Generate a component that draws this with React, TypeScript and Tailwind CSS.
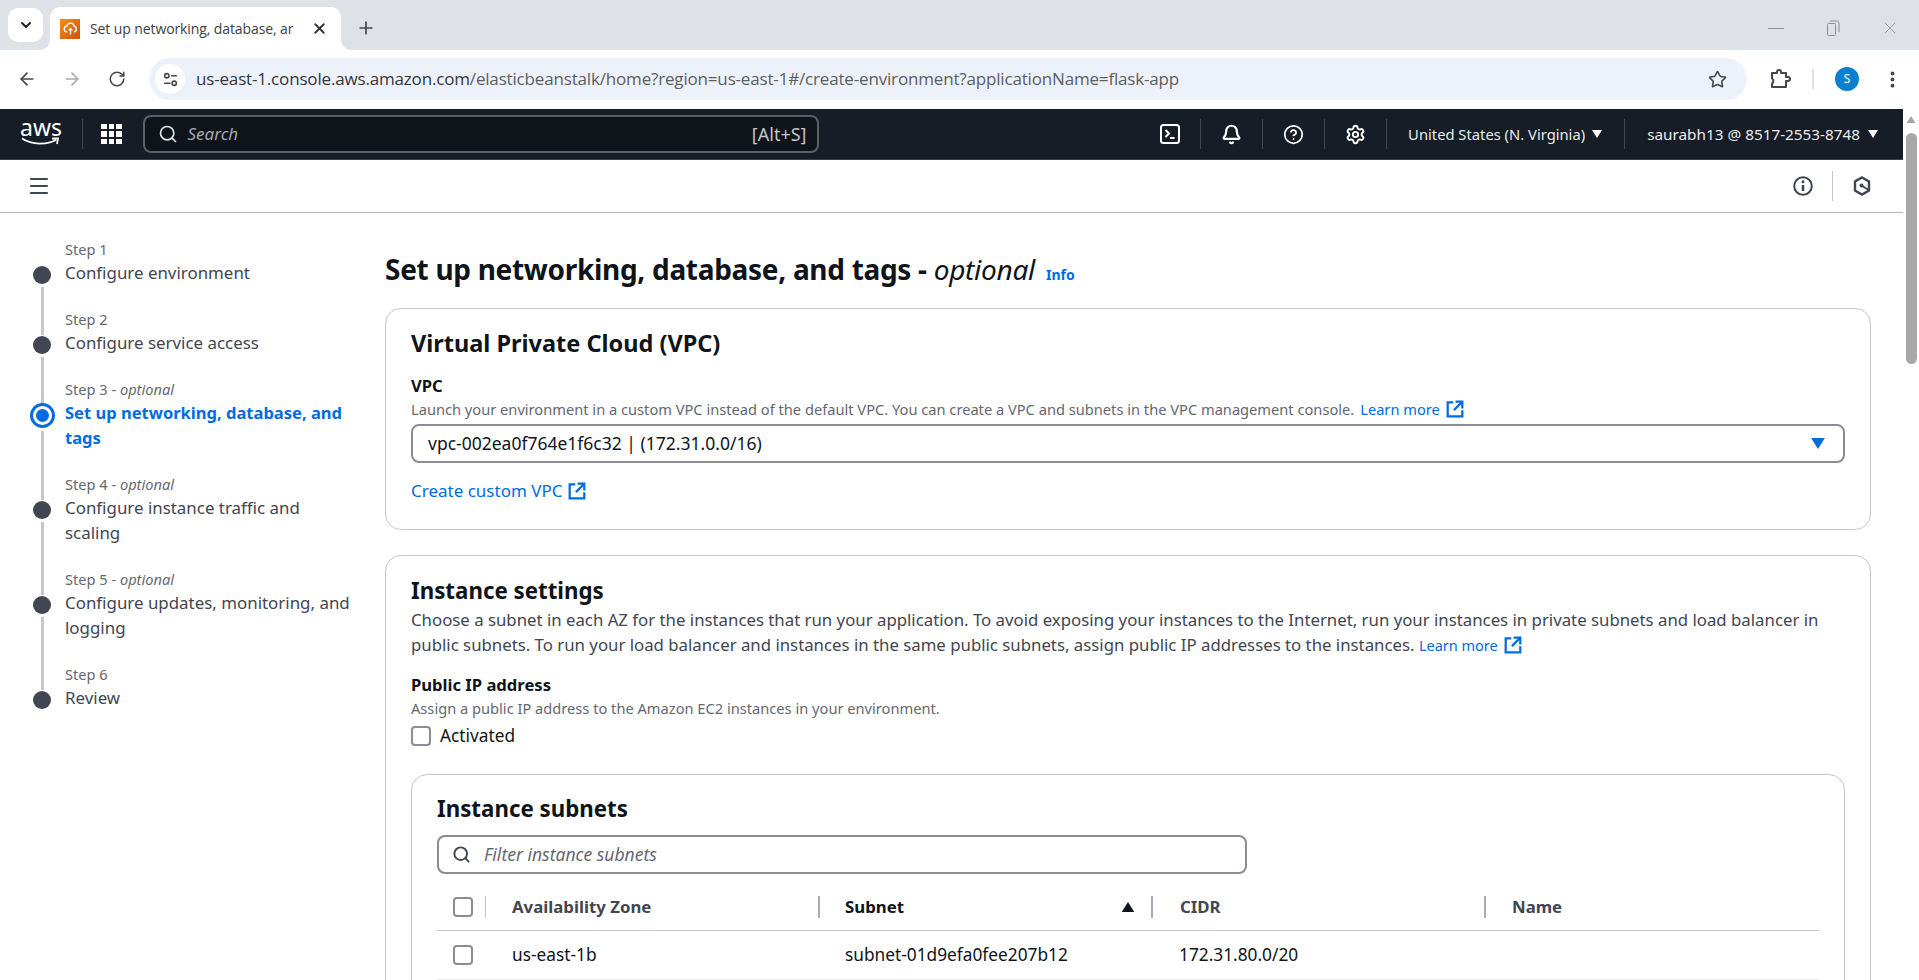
import React from 'react';
import { ChevronDown, X, Plus, ArrowLeft, ArrowRight, RotateCw, Star, EllipsisVertical, Search, Menu, Bell, CircleHelp, Settings } from 'lucide-react';

const ember = { fontFamily: '"Noto Sans", "Open Sans", sans-serif' };
const chromeFont = { fontFamily: '"Open Sans", sans-serif' };

function ExternalIcon({ className }: { className?: string }) {
  return (
    <svg viewBox="0 0 16 16" className={className} fill="none" stroke="currentColor" strokeWidth="2">
      <path d="M6.5 2H1.5V14.5H14.5V9" />
      <path d="M8.5 1.5H14.5V7.5" />
      <path d="M14 2L7 9" />
    </svg>
  );
}

function Caret({ className }: { className?: string }) {
  return (
    <svg viewBox="0 0 10 8" className={className} fill="currentColor">
      <path d="M0 0H10L5 8Z" />
    </svg>
  );
}

function NavDivider() {
  return <div className="w-px h-[30px] bg-[#424650] shrink-0" />;
}

function BrowserChrome() {
  return (
    <>
      <div className="h-[50px] bg-[#dee1e6] flex items-end shrink-0">
        <div className="w-[35px] h-[34px] bg-white rounded-[10px] ml-[8px] mb-[8px] flex items-center justify-center">
          <ChevronDown size={16} strokeWidth={3} className="text-[#222]" />
        </div>
        <div className="w-[291px] h-[43px] bg-white rounded-t-[10px] ml-[7px] flex items-center pl-[10px] relative">
          <div className="absolute -left-[10px] bottom-0 w-[10px] h-[10px] bg-white">
            <div className="w-full h-full bg-[#dee1e6] rounded-br-[10px]" />
          </div>
          <div className="absolute -right-[10px] bottom-0 w-[10px] h-[10px] bg-white">
            <div className="w-full h-full bg-[#dee1e6] rounded-bl-[10px]" />
          </div>
          <div className="w-[20px] h-[20px] bg-gradient-to-br from-[#f5900f] to-[#cf4f12] flex items-center justify-center shrink-0">
            <svg viewBox="0 0 16 16" className="w-[15px] h-[15px]" fill="none" stroke="white" strokeWidth="1.4">
              <path d="M4.5 11.5a3 3 0 0 1-.4-6A4 4 0 0 1 12 5.6a3 3 0 0 1-.4 5.9" />
              <path d="M8 14.5V8M6 10l2-2 2 2" />
            </svg>
          </div>
          <span className="ml-[10px] text-[14px] text-[#3c4043] whitespace-nowrap w-[208px] overflow-hidden shrink-0" style={{ ...chromeFont, letterSpacing: '-0.1px' }}>Set up networking, database, ar</span>
          <X size={17} strokeWidth={2.6} className="text-[#333] ml-[13px] shrink-0" />
        </div>
        <Plus size={20} strokeWidth={2} className="text-[#444] ml-[15px] mb-[12px]" />
        <div className="ml-auto flex items-center mb-[12px] mr-[19px]">
          <div className="w-[16px] h-px bg-[#8d9095]" />
          <svg viewBox="0 0 14 16" className="w-[14px] h-[16px] ml-[42px]" fill="none" stroke="#8d9095" strokeWidth="1">
            <rect x="1.5" y="3.5" width="8" height="12" rx="1" />
            <path d="M4 1h7a2 2 0 0 1 2 2v9" />
          </svg>
          <X size={20} strokeWidth={1} className="ml-[40px] text-[#8d9095]" />
        </div>
      </div>
      <div className="h-[58px] bg-white rounded-t-[10px] flex items-center pl-[17px] shrink-0 text-[#444746]">
        <ArrowLeft size={20} strokeWidth={2} />
        <ArrowRight size={20} strokeWidth={2} className="ml-[25px] text-[#a8aaad]" />
        <RotateCw size={18} strokeWidth={2} className="ml-[26px]" />
        <div className="ml-[23px] w-[1598px] h-[42px] rounded-full bg-[#edf2fa] flex items-center pl-[6px] pr-[20px] shrink-0">
          <div className="w-[30px] h-[30px] bg-white rounded-full flex items-center justify-center shrink-0">
            <svg viewBox="0 0 16 16" className="w-[17px] h-[17px]" fill="none" stroke="#444746" strokeWidth="1.5">
              <circle cx="4.5" cy="4.5" r="2" />
              <path d="M8.5 4.5H14M2 11.5h6" />
              <circle cx="11.5" cy="11.5" r="2" />
            </svg>
          </div>
          <span className="ml-[11px] text-[17px] text-[#33363a] whitespace-nowrap" style={{ ...chromeFont, letterSpacing: '-0.17px' }}>us-east-1.console.aws.amazon.com<span className="text-[#5b5e62]">/elasticbeanstalk/home?region=us-east-1#/create-environment?applicationName=flask-app</span></span>
          <Star size={19} strokeWidth={2} className="ml-auto shrink-0" />
        </div>
        <svg viewBox="0 0 22 22" className="w-[22px] h-[22px] ml-[22px] shrink-0" fill="none" stroke="#444746" strokeWidth="2" strokeLinejoin="round">
          <path d="M3 5H8V4a2 2 0 0 1 4 0V5H17V9H19a2 2 0 0 1 0 4H17V19H3V15.5a3 3 0 0 0 0-5Z" />
        </svg>
        <div className="w-[2px] h-[20px] bg-[#d3e3fd] ml-[21px] shrink-0" />
        <div className="w-[24px] h-[24px] rounded-full bg-[#0b7fd0] text-white text-[12px] flex items-center justify-center ml-[21px] shrink-0">S</div>
        <EllipsisVertical size={21} strokeWidth={2.4} className="ml-[23px] shrink-0" />
      </div>
    </>
  );
}

function TopNav() {
  return (
    <div className="h-[51px] bg-[#161d26] border-b border-[#3b4149] flex items-center text-white shrink-0" style={ember}>
      <div className="ml-[21px] w-[40px] flex flex-col items-center">
        <span className="text-[23px] leading-[18px] -mt-[4px]">aws</span>
        <svg viewBox="0 0 40 9" className="w-[40px] h-[9px] mt-[1px]" fill="none" stroke="white" strokeWidth="1.8">
          <path d="M1 1.5C11 8 26 8 35 3M31 1.5L37 1.5L36 7" />
        </svg>
      </div>
      <div className="w-px h-[30px] bg-[#424650] ml-[21px]" />
      <div className="grid grid-cols-3 gap-[2px] ml-[18px]">
        {Array.from({ length: 9 }).map((_, i) => (
          <div key={i} className="w-[5.5px] h-[5.5px] bg-white" />
        ))}
      </div>
      <div className="ml-[21px] w-[676px] h-[38px] bg-[#0f141a] border-2 border-[#5b6067] rounded-[8px] flex items-center pl-[13px] pr-[10px]">
        <Search size={20} strokeWidth={2} className="text-[#dfe1e3]" />
        <span className="ml-[10px] text-[17px] italic text-[#a3a7ac]">Search</span>
        <span className="ml-auto text-[18px] text-[#c2c4c7]">[Alt+S]</span>
      </div>
      <div className="ml-auto flex items-center h-full pr-[25px]">
        <svg viewBox="0 0 20 20" className="w-[20px] h-[20px] mr-[20px]" fill="none" stroke="white" strokeWidth="2">
          <rect x="1" y="1" width="18" height="18" rx="2.5" />
          <path d="M5.5 6l3.5 3.5L5.5 13M10 14h4.5" />
        </svg>
        <NavDivider />
        <Bell size={21} strokeWidth={2.5} className="mx-[20px]" />
        <NavDivider />
        <CircleHelp size={21} strokeWidth={2} className="mx-[20px]" />
        <NavDivider />
        <Settings size={21} strokeWidth={2.2} className="mx-[20px]" />
        <NavDivider />
        <span className="ml-[21px] text-[14.75px] text-[#e9ebed] whitespace-nowrap">United States (N. Virginia)</span>
        <Caret className="w-[10px] h-[8px] ml-[7px] text-white" />
        <div className="w-px h-[30px] bg-[#424650] ml-[22px]" />
        <span className="ml-[22px] text-[15.3px] text-[#e9ebed] whitespace-nowrap">saurabh13 @ 8517-2553-8748</span>
        <Caret className="w-[10px] h-[8px] ml-[8px] text-white" />
      </div>
    </div>
  );
}

function SubBar() {
  return (
    <div className="h-[53px] bg-white border-b border-[#b4b4bb] flex items-center shrink-0 text-[#424650]">
      <Menu size={24} strokeWidth={2.2} className="ml-[27px]" />
      <div className="ml-auto flex items-center">
        <svg viewBox="0 0 20 20" className="w-[20px] h-[20px]" fill="none" stroke="#424650" strokeWidth="2">
          <circle cx="10" cy="10" r="8.8" />
          <path d="M10 9V15" strokeWidth="2.6" />
          <circle cx="10" cy="5.8" r="1.5" fill="#424650" stroke="none" />
        </svg>
        <div className="w-px h-[30px] bg-[#c6c6cd] mx-[19px]" />
        <svg viewBox="0 0 20 20" className="w-[20px] h-[20px] mr-[31px]" fill="none" stroke="#424650" strokeWidth="2.4">
          <path d="M10 1.5L17 5.5V14.5L10 18.5L3 14.5V5.5Z" />
          <circle cx="9.5" cy="9.5" r="2" fill="#424650" stroke="none" />
          <path d="M10 10L16 13.5" strokeWidth="2" />
        </svg>
      </div>
    </div>
  );
}

const steps = [
  { n: 'Step 1', title: 'Configure environment', opt: false },
  { n: 'Step 2', title: 'Configure service access', opt: false },
  { n: 'Step 3', title: 'Set up networking, database, and tags', opt: true, active: true },
  { n: 'Step 4', title: 'Configure instance traffic and scaling', opt: true },
  { n: 'Step 5', title: 'Configure updates, monitoring, and logging', opt: true },
  { n: 'Step 6', title: 'Review', opt: false },
];

function Steps() {
  return (
    <nav className="w-[385px] shrink-0 pl-[24px] pt-[26px]">
      {steps.map((s, i) => (
        <div key={s.n} className="flex">
          <div className="w-[36px] shrink-0 flex flex-col items-center pt-[27px]">
            {s.active ? (
              <div className="w-[25px] h-[25px] -mt-[3px] shrink-0 rounded-full border-[3px] border-[#006ce0] flex items-center justify-center bg-white">
                <div className="w-[13px] h-[13px] rounded-full bg-[#006ce0]" />
              </div>
            ) : (
              <div className="w-[18px] h-[18px] shrink-0 rounded-full bg-[#424650]" />
            )}
            {i < steps.length - 1 && <div className="w-[3px] flex-1 bg-[#c6c6cd] mt-[3px] -mb-[26px]" />}
          </div>
          <div className={i < steps.length - 1 ? 'w-[292px] pl-[5px] pb-[24px]' : 'w-[292px] pl-[5px]'}>
            <div className="text-[14.6px] leading-[20px] text-[#656871]">
              {s.n}{s.opt && <> - <i>optional</i></>}
            </div>
            <div className={s.active ? 'mt-px text-[16.55px] leading-[25px] font-bold text-[#006ce0]' : 'mt-px text-[16.9px] leading-[25px] text-[#424650]'}>{s.title}</div>
          </div>
        </div>
      ))}
    </nav>
  );
}

function CheckBox() {
  return <div className="w-[20px] h-[20px] border-2 border-[#8c8c94] rounded-[4px] bg-white shrink-0" />;
}

function Content() {
  return (
    <main className="flex-1 min-w-0 pr-[32px]">
      <div className="flex items-baseline pt-[38px] h-[95px]">
        <h1 className="text-[28px] leading-[36px] font-bold text-[#0f141a] tracking-[-0.3px]">Set up networking, database, and tags - <i className="font-normal">optional</i></h1>
        <a className="ml-[11px] text-[14px] font-bold text-[#006ce0]">Info</a>
      </div>

      <section className="border border-[#c6c6cd] rounded-[16px] h-[222px] px-[25px] pt-[18px]">
        <h2 className="text-[23.5px] leading-[32px] font-bold text-[#0f141a]">Virtual Private Cloud (VPC)</h2>
        <div className="mt-[16px] text-[16.6px] leading-[22px] font-bold text-[#0f141a]">VPC</div>
        <div className="mt-[2px] text-[14.65px] leading-[20px] text-[#656871] flex items-center whitespace-nowrap">
          Launch your environment in a custom VPC instead of the default VPC. You can create a VPC and subnets in the VPC management console.
          <a className="ml-[6px] text-[#006ce0] flex items-center">Learn more<ExternalIcon className="w-[18px] h-[18px] ml-[6px]" /></a>
        </div>
        <div className="mt-[5px] h-[39px] border-2 border-[#8c8c94] rounded-[8px] flex items-center pl-[15px] pr-[18px]">
          <span className="text-[17.5px] text-[#0f141a]">vpc-002ea0f764e1f6c32 | (172.31.0.0/16)</span>
          <Caret className="w-[14px] h-[11px] ml-auto text-[#006ce0]" />
        </div>
        <a className="mt-[17px] text-[17px] leading-[22px] text-[#006ce0] flex items-center">Create custom VPC<ExternalIcon className="w-[18px] h-[18px] ml-[6px]" /></a>
      </section>

      <section className="border border-[#c6c6cd] rounded-[16px] mt-[25px] px-[25px] pt-[19px] h-[700px]">
        <h2 className="text-[22.3px] leading-[32px] font-bold text-[#0f141a]">Instance settings</h2>
        <div className="text-[16.8px] leading-[25px] text-[#424650]">
          Choose a subnet in each AZ for the instances that run your application. To avoid exposing your instances to the Internet, run your instances in private subnets and load balancer in public subnets. To run your load balancer and instances in the same public subnets, assign public IP addresses to the instances.{' '}
          <a className="text-[14.5px] leading-[20px] text-[#006ce0] inline-flex items-center align-baseline">Learn more<ExternalIcon className="w-[18px] h-[18px] ml-[6px]" /></a>
        </div>
        <div className="mt-[17px] text-[16.6px] leading-[22px] font-bold text-[#0f141a]">Public IP address</div>
        <div className="mt-[2px] text-[14.65px] leading-[20px] text-[#656871]">Assign a public IP address to the Amazon EC2 instances in your environment.</div>
        <label className="mt-[6px] flex items-center h-[24px]">
          <CheckBox />
          <span className="ml-[9px] text-[17.3px] text-[#0f141a]">Activated</span>
        </label>

        <div className="mt-[26px] border border-[#c6c6cd] rounded-[16px] px-[25px] pt-[18px] h-[400px]">
          <h3 className="text-[22.3px] leading-[32px] font-bold text-[#0f141a]">Instance subnets</h3>
          <div className="mt-[10px] w-[810px] h-[39px] border-2 border-[#8c8c94] rounded-[8px] flex items-center pl-[13px]">
            <Search size={19} strokeWidth={2.4} className="text-[#424650]" />
            <span className="ml-[13px] text-[17.5px] italic text-[#656871]">Filter instance subnets</span>
          </div>
          <div className="mt-[11px] h-[46px] pb-[2px] flex items-center border-b border-[#c6c6cd] text-[16.8px] font-bold text-[#424650]">
            <div className="w-[49px] h-[22px] pl-[16px] border-r border-[#c6c6cd] flex items-center shrink-0"><CheckBox /></div>
            <div className="w-[334px] h-[22px] border-r-2 border-[#a9abb2] pl-[26px] flex items-center shrink-0">Availability Zone</div>
            <div className="w-[333px] h-[22px] border-r-2 border-[#a9abb2] pl-[25px] pr-[16px] flex items-center justify-between text-[#0f141a] shrink-0">Subnet<Caret className="w-[14px] h-[10px] rotate-180 text-[#0f141a]" /></div>
            <div className="w-[333px] h-[22px] border-r-2 border-[#a9abb2] pl-[27px] flex items-center shrink-0">CIDR</div>
            <div className="pl-[26px]">Name</div>
          </div>
          <div className="h-[49px] flex items-center border-b border-[#ebebf0] text-[17.3px] text-[#0f141a]">
            <div className="w-[49px] pl-[16px] shrink-0"><CheckBox /></div>
            <div className="w-[333px] pl-[26px] shrink-0">us-east-1b</div>
            <div className="w-[333px] pl-[26px] shrink-0">subnet-01d9efa0fee207b12</div>
            <div className="pl-[27px]">172.31.80.0/20</div>
          </div>
        </div>
      </section>
    </main>
  );
}

function Scrollbar() {
  return (
    <div className="w-[16px] shrink-0 bg-white flex flex-col items-center pt-[7px]">
      <Caret className="w-[10px] h-[7px] rotate-180 text-[#a3a3a3]" />
      <div className="mt-[10px] w-[11px] h-[231px] bg-[#a8a8a8] rounded-full" />
    </div>
  );
}

export default function App() {
  return (
    <div className="h-screen overflow-hidden flex flex-col bg-white" style={ember}>
      <BrowserChrome />
      <div className="flex flex-1 min-h-0 mt-px">
        <div className="flex-1 min-w-0 flex flex-col">
          <TopNav />
          <SubBar />
          <div className="flex flex-1 min-h-0 overflow-hidden">
            <Steps />
            <Content />
          </div>
        </div>
        <Scrollbar />
      </div>
    </div>
  );
}
